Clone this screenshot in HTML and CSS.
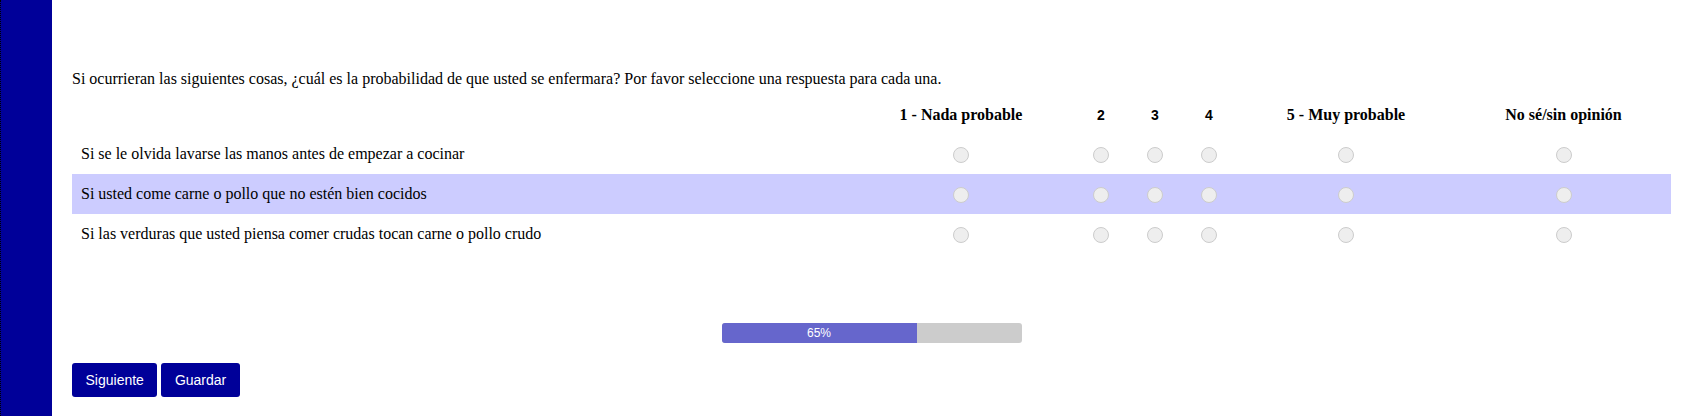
FILE: index.html
```html
<!DOCTYPE html>
<html lang="es">
<head>
    <meta charset="UTF-8">
    <meta name="viewport" content="width=device-width, initial-scale=1.0">
    <title>Encuesta</title>
    <link rel="stylesheet" href="styles.css">
</head>
<body>
    <div class="sidebar"></div>
    <div class="main">
        <p class="question">Si ocurrieran las siguientes cosas, ¿cuál es la probabilidad de que usted se enfermara? Por favor seleccione una respuesta para cada una.</p>
        <table class="grid">
            <colgroup>
                <col class="col-label">
                <col class="col-wide">
                <col class="col-num">
                <col class="col-num">
                <col class="col-num">
                <col class="col-five">
                <col>
            </colgroup>
            <thead>
                <tr>
                    <th></th>
                    <th>1 - Nada probable</th>
                    <th class="num">2</th>
                    <th class="num">3</th>
                    <th class="num">4</th>
                    <th>5 - Muy probable</th>
                    <th>No sé/sin opinión</th>
                </tr>
            </thead>
            <tbody>
                <tr>
                    <td class="label">Si se le olvida lavarse las manos antes de empezar a cocinar</td>
                    <td><input type="radio" name="q1"></td>
                    <td><input type="radio" name="q1"></td>
                    <td><input type="radio" name="q1"></td>
                    <td><input type="radio" name="q1"></td>
                    <td><input type="radio" name="q1"></td>
                    <td><input type="radio" name="q1"></td>
                </tr>
                <tr class="alt">
                    <td class="label">Si usted come carne o pollo que no estén bien cocidos</td>
                    <td><input type="radio" name="q2"></td>
                    <td><input type="radio" name="q2"></td>
                    <td><input type="radio" name="q2"></td>
                    <td><input type="radio" name="q2"></td>
                    <td><input type="radio" name="q2"></td>
                    <td><input type="radio" name="q2"></td>
                </tr>
                <tr>
                    <td class="label">Si las verduras que usted piensa comer crudas tocan carne o pollo crudo</td>
                    <td><input type="radio" name="q3"></td>
                    <td><input type="radio" name="q3"></td>
                    <td><input type="radio" name="q3"></td>
                    <td><input type="radio" name="q3"></td>
                    <td><input type="radio" name="q3"></td>
                    <td><input type="radio" name="q3"></td>
                </tr>
            </tbody>
        </table>

        <div class="progress">
            <div class="progress-fill" style="width: 65%;">65%</div>
        </div>

        <div class="actions">
            <button>Siguiente</button>
            <button>Guardar</button>
        </div>
    </div>
</body>
</html>
```

FILE: styles.css
```css
body {
    margin: 0;
    display: flex;
    min-height: 100vh;
    font-family: "Liberation Serif", "Times New Roman", serif;
    font-size: 16px;
    color: #000;
    background-color: #fff;
}
.sidebar {
    width: 51px;
    flex-shrink: 0;
    background-color: #000099;
    border-left: 1px dotted #000;
}
.main {
    flex: 1;
    padding: 70px 27px 0 20px;
}
.question {
    margin: 0 0 8px 0;
    line-height: 18px;
}
.grid {
    width: 100%;
    border-collapse: collapse;
}
.col-label {
    width: 776px;
}
.col-wide {
    width: 226px;
}
.col-num {
    width: 54px;
}
.col-five {
    width: 220px;
}
.grid th {
    height: 38px;
    padding: 0;
    font-weight: bold;
    text-align: center;
    vertical-align: middle;
}
.grid th.num {
    font-family: "Liberation Sans", Arial, sans-serif;
    font-size: 14px;
}
.grid td {
    height: 40px;
    padding: 0;
    text-align: center;
    vertical-align: middle;
}
.grid td.label {
    text-align: left;
    padding-left: 9px;
}
.grid tr.alt td {
    background-color: #ccccff;
}
input[type="radio"] {
    appearance: none;
    -webkit-appearance: none;
    width: 16px;
    height: 16px;
    margin: 0;
    border: 1px solid #cccccc;
    border-radius: 50%;
    background-color: #eeeeee;
    vertical-align: middle;
    box-sizing: border-box;
}
.progress {
    width: 300px;
    height: 20px;
    margin: 69px auto 0 auto;
    background-color: #cccccc;
    border-radius: 3px;
    overflow: hidden;
}
.progress-fill {
    height: 100%;
    background-color: #6666cc;
    color: #fff;
    font-family: "Liberation Sans", Arial, sans-serif;
    font-size: 12px;
    line-height: 20px;
    text-align: center;
}
.actions {
    margin-top: 20px;
    display: flex;
    gap: 4px;
}
button {
    font-family: "Liberation Sans", Arial, sans-serif;
    font-size: 14px;
    height: 34px;
    padding: 0 13.5px;
    background-color: #000099;
    color: #fff;
    border: none;
    border-radius: 3px;
    cursor: pointer;
}
```
